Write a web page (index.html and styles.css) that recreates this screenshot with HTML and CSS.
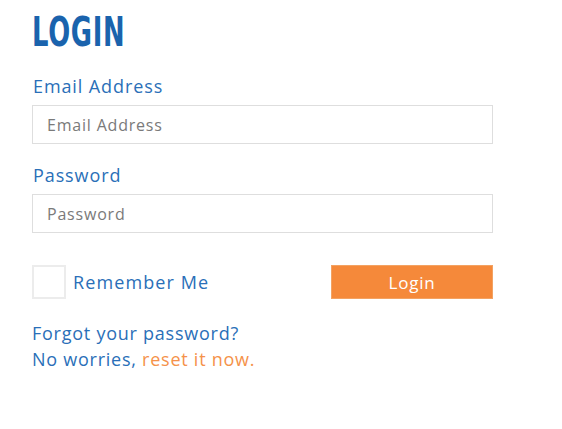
FILE: index.html
```html
<!DOCTYPE html>
<html>
<head>
<meta charset="utf-8">
<link rel="stylesheet" href="styles.css">
</head>
<body>
<div class="page">
  <h1 class="title">LOGIN</h1>
  <form class="form">
    <label class="label">Email Address</label>
    <input class="field" type="text" placeholder="Email Address">
    <label class="label">Password</label>
    <input class="field" type="password" placeholder="Password">
    <div class="actions">
      <label class="remember"><span class="check"></span>Remember Me</label>
      <button class="btn" type="button">Login</button>
    </div>
    <p class="forgot">Forgot your password?<br>No worries, <a class="reset" href="#">reset it now.</a></p>
  </form>
</div>
</body>
</html>
```
FILE: styles.css
```css
html, body { margin: 0; padding: 0; background: #fff; }
body { font-family: "Open Sans", "DejaVu Sans", sans-serif; }
.page { padding: 10px 0 0 32px; width: 461px; }
.title {
  margin: 0;
  font-family: "DejaVu Sans Condensed", "Liberation Sans Narrow", sans-serif;
  font-weight: bold;
  font-size: 41px;
  line-height: 44px;
  color: #1a63ad;
  transform: scaleX(0.70);
  transform-origin: left;
  letter-spacing: 1px;
}
.form { display: flex; flex-direction: column; margin-top: 19px; }
.label {
  display: block;
  font-size: 18px;
  letter-spacing: 0.9px;
  line-height: 26px;
  color: #2a6fb8;
  padding-left: 1px;
}
.field {
  box-sizing: border-box;
  height: 39px;
  width: 461px;
  margin: 6px 0 18px;
  border: 1px solid #dedede;
  padding: 0 14px;
  font-family: inherit;
  font-size: 16px;
  letter-spacing: 0.8px;
  color: #555;
  outline: none;
}
.field::placeholder { color: #7a7a7a; }
.actions {
  display: flex;
  justify-content: space-between;
  align-items: center;
  margin-top: 14px;
}
.remember {
  display: flex;
  align-items: center;
  gap: 7px;
  font-size: 18px;
  letter-spacing: 1.1px;
  color: #2a6fb8;
}
.check {
  box-sizing: border-box;
  width: 34px;
  height: 34px;
  border: 2px solid #ececec;
  background: #fff;
}
.btn {
  width: 162px;
  height: 34px;
  border: 1px solid #f3a262;
  background: #f5893a;
  color: #fff;
  font-family: inherit;
  font-size: 17px;
  letter-spacing: 0.8px;
  padding: 0;
}
.forgot {
  margin: 21px 0 0;
  font-size: 18px;
  letter-spacing: 0.75px;
  line-height: 26px;
  color: #2a6fb8;
}
.reset { color: #f5924a; text-decoration: none; }
```
